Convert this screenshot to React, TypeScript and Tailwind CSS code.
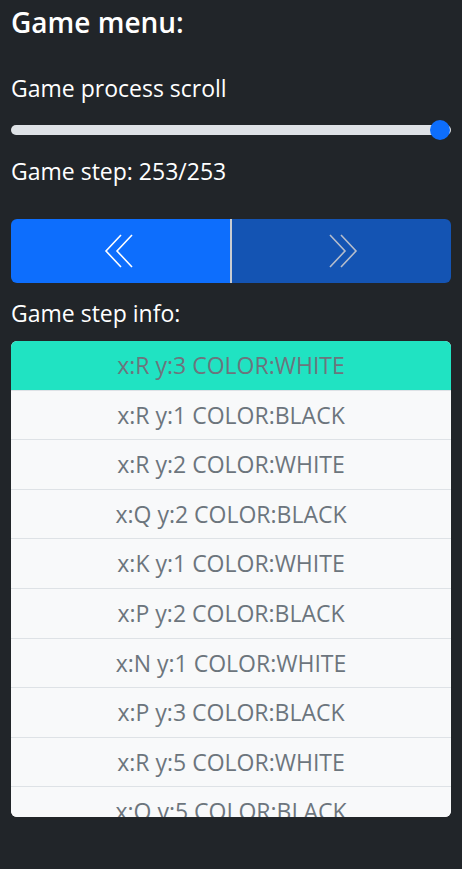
import React from 'react';

const STEPS = [
  'x:R y:3 COLOR:WHITE',
  'x:R y:1 COLOR:BLACK',
  'x:R y:2 COLOR:WHITE',
  'x:Q y:2 COLOR:BLACK',
  'x:K y:1 COLOR:WHITE',
  'x:P y:2 COLOR:BLACK',
  'x:N y:1 COLOR:WHITE',
  'x:P y:3 COLOR:BLACK',
  'x:R y:5 COLOR:WHITE',
  'x:Q y:5 COLOR:BLACK',
  'x:P y:5 COLOR:WHITE',
];

const ChevronDouble = ({ dir }: { dir: 'left' | 'right' }) => (
  <svg width="33" height="34" viewBox="0 0 33 34" fill="none" stroke="currentColor" strokeWidth="1.6">
    {dir === 'left' ? (
      <>
        <polyline points="17,1 2,17 17,33" />
        <polyline points="28,1 13,17 28,33" />
      </>
    ) : (
      <>
        <polyline points="5,1 20,17 5,33" />
        <polyline points="16,1 31,17 16,33" />
      </>
    )}
  </svg>
);

const App = () => {
  const active = 0;
  return (
    <div className="min-h-[869px] bg-[#212529] text-white font-['Open_Sans',sans-serif] px-[11px] pt-[4px]">
      <h4 className="text-[28px] font-semibold leading-[36px]">Game menu:</h4>

      <div className="mt-[33px] text-[23px] leading-[30px]">Game process scroll</div>

      {/* range slider */}
      <div className="relative h-[20px] mt-[17px] flex items-center">
        <div className="w-full h-[10px] rounded-full bg-[#dee2e6]" />
        <div className="absolute right-[1px] top-0 w-[20px] h-[20px] rounded-full bg-[#0d6efd]" />
      </div>

      <div className="mt-[16px] text-[23px] leading-[30px]">Game step: 253/253</div>

      <div className="mt-[33px] flex h-[64px] rounded-[6px] overflow-hidden">
        <button className="flex-1 bg-[#0d6efd] flex items-center justify-center text-white">
          <ChevronDouble dir="left" />
        </button>
        <div className="w-[2px] bg-[#c9ccd1]" />
        <button className="flex-1 bg-[#1454b3] flex items-center justify-center text-[#b5bdcc]">
          <ChevronDouble dir="right" />
        </button>
      </div>

      <div className="mt-[15px] text-[23px] leading-[30px]">Game step info:</div>

      <ul className="mt-[13px] h-[476px] overflow-hidden rounded-[6px] bg-[#f8f9fa]">
        {STEPS.map((s, i) => (
          <li
            key={i}
            className={`h-[49.6px] flex items-center justify-center text-[23px] text-[#6c757d] border-b-[1.5px] border-[#dee2e6] ${
              i === active ? 'bg-[#20e3c2]' : 'bg-[#f8f9fa]'
            }`}
          >
            {s}
          </li>
        ))}
      </ul>
    </div>
  );
};

export default App;
